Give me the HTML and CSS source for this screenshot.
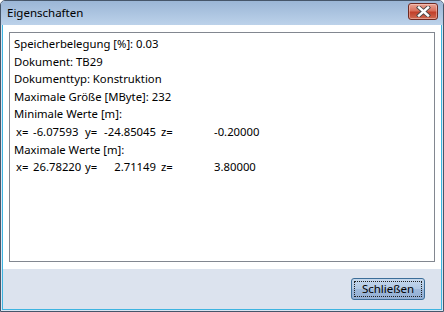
FILE: index.html
```html
<!DOCTYPE html>
<html lang="de">
<head>
<meta charset="utf-8">
<link rel="stylesheet" href="styles.css">
</head>
<body>
<div class="window">
  <div class="titlebar">
    <span class="title">Eigenschaften</span>
    <div class="close">
      <svg width="15" height="11" viewBox="0 0 15 11">
        <path d="M3 1.5 L12 9.5 M12 1.5 L3 9.5" stroke="#4a4a4a" stroke-width="4.2" stroke-linecap="square" fill="none"/>
        <path d="M3 1.5 L12 9.5 M12 1.5 L3 9.5" stroke="#ffffff" stroke-width="2.4" stroke-linecap="square" fill="none"/>
      </svg>
    </div>
  </div>
  <div class="client">
    <div class="content">
      <div class="box">
        <div class="line">Speicherbelegung [%]: 0.03</div>
        <div class="line">Dokument: TB29</div>
        <div class="line">Dokumenttyp: Konstruktion</div>
        <div class="line">Maximale Größe [MByte]: 232</div>
        <div class="line">Minimale Werte [m]:</div>
        <div class="coords">
          <span class="lx">x=</span><span class="vx">-6.07593</span>
          <span class="ly">y=</span><span class="vy">-24.85045</span>
          <span class="lz">z=</span><span class="vz">-0.20000</span>
        </div>
        <div class="line">Maximale Werte [m]:</div>
        <div class="coords">
          <span class="lx">x=</span><span class="vx">26.78220</span>
          <span class="ly">y=</span><span class="vy">2.71149</span>
          <span class="lz">z=</span><span class="vz">3.80000</span>
        </div>
      </div>
    </div>
    <div class="footer">
      <div class="btn"><span class="focus">Schließen</span></div>
    </div>
  </div>
</div>
</body>
</html>
```

FILE: styles.css
```css
html, body {
  margin: 0;
  padding: 0;
  background: #ffffff;
}
body {
  font-family: "Noto Sans", "Open Sans", sans-serif;
  font-size: 11.3px;
  color: #000;
}
.window {
  width: 444px;
  height: 312px;
  box-sizing: border-box;
  border: 1px solid #46566a;
  border-radius: 5px 5px 0 0;
  background: #dbe6f2;
  display: flex;
  flex-direction: column;
  overflow: hidden;
}
.titlebar {
  height: 24px;
  flex: none;
  background: linear-gradient(#9bb6d6, #bcd2ea);
  display: flex;
  align-items: center;
  justify-content: space-between;
  padding: 0 5px 0 6px;
}
.title {
  font-size: 11.5px;
  color: #000;
  margin-top: -2px;
}
.close {
  width: 28px;
  height: 15px;
  border: 1px solid #6e2a22;
  border-radius: 3px;
  background: linear-gradient(#e9a596, #d8705c 45%, #c1402a 55%, #cf6a52);
  display: flex;
  align-items: center;
  justify-content: center;
  margin-top: -3px;
  box-shadow: inset 0 0 0 1px rgba(255,220,210,0.45);
}
.client {
  flex: 1;
  margin: 0 1px 1px 1px;
  border: 1px solid #3db4e0;
  border-top: none;
  background: #ffffff;
  display: flex;
  flex-direction: column;
}
.content {
  flex: 1;
  padding: 7px 6px 7px 6px;
  display: flex;
  flex-direction: column;
}
.box {
  height: 230px;
  box-sizing: border-box;
  border: 1px solid #828790;
  background: #fff;
  padding: 2px 4px;
  line-height: 17.6px;
}
.coords {
  display: grid;
  grid-template-columns: 19px 52px 13px 58px 58px auto;
  white-space: nowrap;
}
.lx { padding-left: 2px; }
.vx { text-align: left; }
.ly { padding-left: 0; }
.vy { text-align: right; }
.lz { padding-left: 5px; }
.vz { text-align: left; }
.footer {
  height: 40px;
  flex: none;
  background: #dce3ee;
  display: flex;
  justify-content: flex-end;
  align-items: flex-start;
  padding: 9px 16px 0 0;
  box-sizing: border-box;
}
.btn {
  width: 74px;
  height: 22px;
  box-sizing: border-box;
  border: 1px solid #3c6e99;
  border-radius: 3px;
  background: linear-gradient(#c6d8ec, #b2c9e4 48%, #9fb9da 52%, #93aed3);
  padding: 2px;
  display: flex;
}
.focus {
  flex: 1;
  border: 1px dotted #202020;
  display: flex;
  align-items: center;
  justify-content: center;
  font-size: 11.5px;
  color: #000;
  line-height: 1;
}
```
